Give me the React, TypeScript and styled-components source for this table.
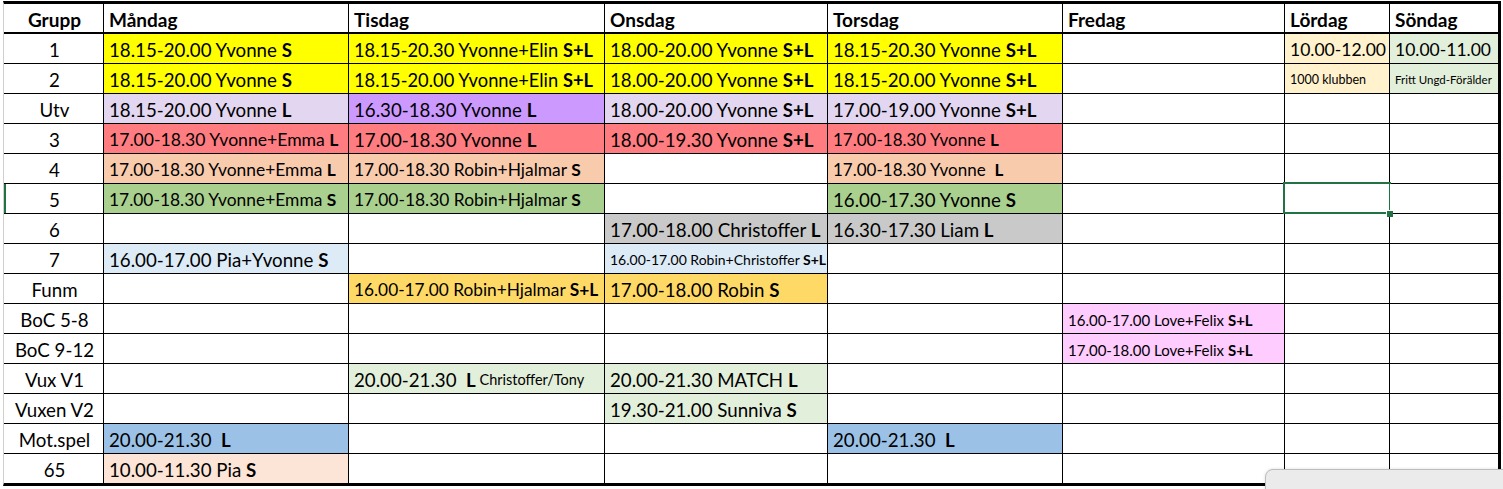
import React from "react";
import styled, { createGlobalStyle } from "styled-components";

const GlobalStyle = createGlobalStyle`
  body {
    margin: 0;
    background: #ffffff;
    font-family: "Lato", "Liberation Sans", sans-serif;
    color: #000;
  }
`;

// column widths, border included
const COLS = "100px 245px 256px 223px 235px 222px 105px 111px";

const Sheet = styled.div`
  position: relative;
  width: 1503px;
  height: 489px;
  overflow: hidden;
  padding: 1px 0 0 3px;
  box-sizing: border-box;
`;

const Table = styled.div`
  display: flex;
  flex-direction: column;
  width: 1498px;
  border-top: 3px solid #000;
  border-bottom: 3px solid #000;
  border-left: 1px solid #d0d0d0;
  box-sizing: border-box;
`;

const Row = styled.div<{ $h?: number }>`
  display: grid;
  grid-template-columns: ${COLS};
  height: ${(p) => p.$h ?? 30}px;
`;

const Cell = styled.div<{
  $bg?: string;
  $size?: number;
  $center?: boolean;
  $edge?: boolean;
  $foot?: boolean;
  $mark?: boolean;
}>`
  position: relative;
  display: flex;
  align-items: center;
  justify-content: ${(p) => (p.$center ? "center" : "flex-start")};
  padding: 2px 3px 0 5px;
  background: ${(p) => p.$bg ?? "#ffffff"};
  font-size: ${(p) => p.$size ?? 18.7}px;
  border-right: ${(p) => (p.$edge ? 3 : 1)}px solid #000;
  border-bottom: ${(p) => (p.$foot ? "none" : "1px solid #000")};
  box-shadow: ${(p) => (p.$mark ? "inset 2px 0 0 #217346" : "none")};
  white-space: pre;
  box-sizing: border-box;
  min-width: 0;
`;

const HeadCell = styled(Cell)`
  font-weight: 700;
  font-size: 19px;
  border-bottom: 2px solid #000;
  padding-top: 3px;
`;

const Selected = styled(Cell)`
  &::after {
    content: "";
    position: absolute;
    left: -2px;
    top: -2px;
    right: -2px;
    bottom: -1px;
    border: 2px solid #217346;
  }
  &::before {
    content: "";
    position: absolute;
    right: -4px;
    bottom: -4px;
    width: 6px;
    height: 6px;
    background: #217346;
    border-top: 1px solid #fff;
    border-left: 1px solid #fff;
    z-index: 1;
  }
`;

const Strong = styled.b`
  font-weight: 700;
`;

const Small = styled.span<{ $size: number }>`
  font-size: ${(p) => p.$size}px;
`;

const Toast = styled.div`
  position: absolute;
  left: 1265px;
  top: 469px;
  width: 260px;
  height: 40px;
  background: #ebebeb;
  border: 1px solid #bdbdbd;
  border-top-left-radius: 8px;
  box-shadow: 0 0 3px rgba(0, 0, 0, 0.15);
  padding: 17px 0 0 19px;
  box-sizing: border-box;
`;

type Entry = { t: string; b?: string; s?: string; bg: string; size?: number; ss?: number };

const Y = "#ffff00";
const LP = "#e2d6f0";
const PU = "#cc99ff";
const RE = "#ff7c80";
const PE = "#f8cbad";
const GR = "#a9d08e";
const GY = "#c9c9c9";
const LB = "#ddebf7";
const OR = "#ffd966";
const PI = "#ffccff";
const LG = "#e2efda";
const BL = "#9bc2e6";
const LPE = "#fce4d6";
const CR = "#fff2cc";

const days = ["Måndag", "Tisdag", "Onsdag", "Torsdag", "Fredag", "Lördag", "Söndag"];

const rows: { label: string; cells: (Entry | null)[] }[] = [
  {
    label: "1",
    cells: [
      { t: "18.15-20.00 Yvonne ", b: "S", bg: Y },
      { t: "18.15-20.30 Yvonne+Elin ", b: "S+L", bg: Y, size: 18.3 },
      { t: "18.00-20.00 Yvonne ", b: "S+L", bg: Y },
      { t: "18.15-20.30 Yvonne ", b: "S+L", bg: Y },
      null,
      { t: "10.00-12.00", bg: CR, size: 17.5 },
      { t: "10.00-11.00", bg: LG, size: 17.5 },
    ],
  },
  {
    label: "2",
    cells: [
      { t: "18.15-20.00 Yvonne ", b: "S", bg: Y },
      { t: "18.15-20.00 Yvonne+Elin ", b: "S+L", bg: Y, size: 18.3 },
      { t: "18.00-20.00 Yvonne ", b: "S+L", bg: Y },
      { t: "18.15-20.00 Yvonne ", b: "S+L", bg: Y },
      null,
      { t: "1000 klubben", bg: CR, size: 12.5 },
      { t: "Fritt Ungd-Förälder", bg: LG, size: 11.5 },
    ],
  },
  {
    label: "Utv",
    cells: [
      { t: "18.15-20.00 Yvonne ", b: "L", bg: LP },
      { t: "16.30-18.30 Yvonne ", b: "L", bg: PU },
      { t: "18.00-20.00 Yvonne ", b: "S+L", bg: LP },
      { t: "17.00-19.00 Yvonne ", b: "S+L", bg: LP },
      null,
      null,
      null,
    ],
  },
  {
    label: "3",
    cells: [
      { t: "17.00-18.30 Yvonne+Emma ", b: "L", bg: RE, size: 17.6 },
      { t: "17.00-18.30 Yvonne ", b: "L", bg: RE },
      { t: "18.00-19.30 Yvonne ", b: "S+L", bg: RE },
      { t: "17.00-18.30 Yvonne ", b: "L", bg: RE, size: 17 },
      null,
      null,
      null,
    ],
  },
  {
    label: "4",
    cells: [
      { t: "17.00-18.30 Yvonne+Emma ", b: "L", bg: PE, size: 17.4 },
      { t: "17.00-18.30 Robin+Hjalmar ", b: "S", bg: PE, size: 17.4 },
      null,
      { t: "17.00-18.30 Yvonne  ", b: "L", bg: PE, size: 17 },
      null,
      null,
      null,
    ],
  },
  {
    label: "5",
    cells: [
      { t: "17.00-18.30 Yvonne+Emma ", b: "S", bg: GR, size: 17.4 },
      { t: "17.00-18.30 Robin+Hjalmar ", b: "S", bg: GR, size: 17.4 },
      null,
      { t: "16.00-17.30 Yvonne ", b: "S", bg: GR },
      null,
      null,
      null,
    ],
  },
  {
    label: "6",
    cells: [
      null,
      null,
      { t: "17.00-18.00 Christoffer ", b: "L", bg: GY, size: 18.8 },
      { t: "16.30-17.30 Liam ", b: "L", bg: GY },
      null,
      null,
      null,
    ],
  },
  {
    label: "7",
    cells: [
      { t: "16.00-17.00 Pia+Yvonne ", b: "S", bg: LB },
      null,
      { t: "16.00-17.00 Robin+Christoffer ", b: "S+L", bg: LB, size: 14 },
      null,
      null,
      null,
      null,
    ],
  },
  {
    label: "Funm",
    cells: [
      null,
      { t: "16.00-17.00 Robin+Hjalmar ", b: "S+L", bg: OR, size: 17.3 },
      { t: "17.00-18.00 Robin ", b: "S", bg: OR },
      null,
      null,
      null,
      null,
    ],
  },
  {
    label: "BoC 5-8",
    cells: [null, null, null, null, { t: "16.00-17.00 Love+Felix ", b: "S+L", bg: PI, size: 15 }, null, null],
  },
  {
    label: "BoC 9-12",
    cells: [null, null, null, null, { t: "17.00-18.00 Love+Felix ", b: "S+L", bg: PI, size: 15 }, null, null],
  },
  {
    label: "Vux V1",
    cells: [
      null,
      { t: "20.00-21.30  ", b: "L", s: " Christoffer/Tony", ss: 14.5, bg: LG },
      { t: "20.00-21.30 MATCH ", b: "L", bg: LG },
      null,
      null,
      null,
      null,
    ],
  },
  {
    label: "Vuxen V2",
    cells: [null, null, { t: "19.30-21.00 Sunniva ", b: "S", bg: LG }, null, null, null, null],
  },
  {
    label: "Mot.spel",
    cells: [
      { t: "20.00-21.30  ", b: "L", bg: BL },
      null,
      null,
      { t: "20.00-21.30  ", b: "L", bg: BL },
      null,
      null,
      null,
    ],
  },
  {
    label: "65",
    cells: [{ t: "10.00-11.30 Pia ", b: "S", bg: LPE }, null, null, null, null, null, null],
  },
];

export default function App() {
  return (
    <Sheet>
      <GlobalStyle />
      <Table>
        <Row>
          <HeadCell $center>Grupp</HeadCell>
          {days.map((d, i) => (
            <HeadCell key={d} $edge={i === days.length - 1}>
              {d}
            </HeadCell>
          ))}
        </Row>
        {rows.map((r, ri) => {
          const foot = ri === rows.length - 1;
          return (
            <Row key={r.label} $h={foot ? 29 : 30}>
              <Cell $center $foot={foot} $mark={r.label === "5"}>
                {r.label}
              </Cell>
              {r.cells.map((c, ci) => {
                const edge = ci === r.cells.length - 1;
                const Box = r.label === "5" && ci === 5 ? Selected : Cell;
                return (
                  <Box key={ci} $bg={c?.bg} $size={c?.size} $edge={edge} $foot={foot}>
                    {c && (
                      <>
                        {c.t}
                        {c.b && <Strong>{c.b}</Strong>}
                        {c.s && <Small $size={c.ss ?? 15}>{c.s}</Small>}
                      </>
                    )}
                  </Box>
                );
              })}
            </Row>
          );
        })}
      </Table>
      <Toast>
        <svg width="12" height="6" viewBox="0 0 12 6">
          <rect x="0" y="1" width="2" height="5" fill="#e8531f" />
          <rect x="4" y="1" width="2" height="5" fill="#e8531f" />
          <rect x="8" y="1" width="2" height="5" fill="#e8531f" />
        </svg>
      </Toast>
    </Sheet>
  );
}
